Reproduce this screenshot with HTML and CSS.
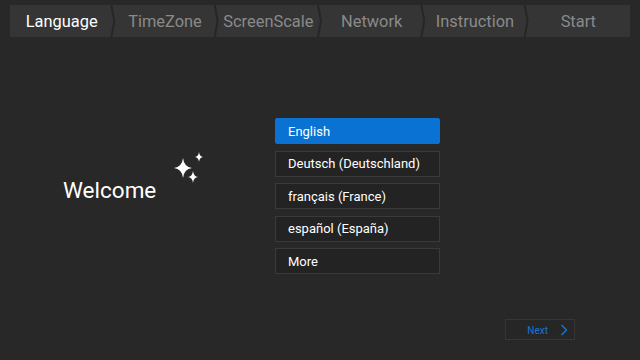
FILE: index.html
```html
<!DOCTYPE html>
<html lang="en">
<head>
  <meta charset="UTF-8">
  <title>Setup Wizard</title>
  <link rel="stylesheet" href="styles.css">
</head>
<body>
  <nav class="steps">
    <div class="step active">Language</div>
    <div class="step">TimeZone</div>
    <div class="step">ScreenScale</div>
    <div class="step">Network</div>
    <div class="step">Instruction</div>
    <div class="step last">Start</div>
  </nav>
  <main class="content">
    <div class="welcome">
      <span class="welcome-title">Welcome</span>
      <svg class="sparkles" width="32" height="36" viewBox="0 0 32 36" aria-hidden="true">
        <path d="M10 6 Q11 15 19 16 Q11 17 10 26 Q9 17 1 16 Q9 15 10 6Z" fill="#fff"/>
        <path d="M26 0 Q26.5 4.5 30 5 Q26.5 5.5 26 10 Q25.5 5.5 22 5 Q25.5 4.5 26 0Z" fill="#fff"/>
        <path d="M20 19 Q20.6 24.4 25 25 Q20.6 25.6 20 31 Q19.4 25.6 15 25 Q19.4 24.4 20 19Z" fill="#fff"/>
      </svg>
    </div>
    <ul class="lang-list">
      <li class="lang selected">English</li>
      <li class="lang">Deutsch (Deutschland)</li>
      <li class="lang">français (France)</li>
      <li class="lang">español (España)</li>
      <li class="lang">More</li>
    </ul>
  </main>
  <footer class="footer">
    <button class="next-btn">Next
      <svg width="8" height="12" viewBox="0 0 8 12" aria-hidden="true"><path d="M1.5 1 L6.5 6 L1.5 11" fill="none" stroke="#1478d4" stroke-width="1.4"/></svg>
    </button>
  </footer>
</body>
</html>
```
FILE: styles.css
```css
body {
  margin: 0;
  width: 640px;
  height: 360px;
  overflow: hidden;
  background: #282828;
  font-family: Roboto, "Liberation Sans", Arial, sans-serif;
  color: #fff;
}
.steps {
  display: flex;
  margin: 5px 10px 0 10px;
  height: 32px;
}
.step {
  position: relative;
  flex: 1;
  background: #353535;
  color: #8a8a8a;
  font-size: 16.4px;
  padding-top: 1px;
  display: flex;
  align-items: center;
  justify-content: center;
}
.step.active {
  color: #fff;
}
.step:not(.last)::after {
  content: "";
  position: absolute;
  right: -2px;
  top: 0;
  width: 5px;
  height: 100%;
  background: #262626;
  clip-path: polygon(0 0, 40% 0, 100% 50%, 40% 100%, 0 100%, 60% 50%);
  z-index: 1;
}
.content {
  display: flex;
  align-items: flex-start;
  margin-top: 81px;
}
.welcome {
  display: flex;
  align-items: flex-start;
  margin: 34px 0 0 63px;
  width: 212px;
}
.welcome-title {
  font-size: 22.5px;
  margin-top: 25px;
}
.sparkles {
  margin-left: 17px;
}
.lang-list {
  list-style: none;
  margin: 0;
  padding: 0;
  width: 165px;
  display: flex;
  flex-direction: column;
  gap: 6.5px;
}
.lang {
  box-sizing: border-box;
  height: 26px;
  border: 1px solid #3a3a3a;
  background: #232323;
  font-size: 13px;
  padding-left: 12px;
  display: flex;
  align-items: center;
}
.lang.selected {
  background: #0a72d2;
  border-color: #0a72d2;
  border-radius: 2px;
}
.footer {
  display: flex;
  justify-content: flex-end;
  margin-top: 45px;
  padding-right: 65px;
}
.next-btn {
  width: 70px;
  height: 21px;
  background: #262626;
  border: 1px solid #363636;
  color: #1478d4;
  font-family: inherit;
  font-size: 10px;
  padding: 1px 6px 0 0;
  display: flex;
  align-items: center;
  justify-content: flex-end;
  gap: 12px;
}
```
